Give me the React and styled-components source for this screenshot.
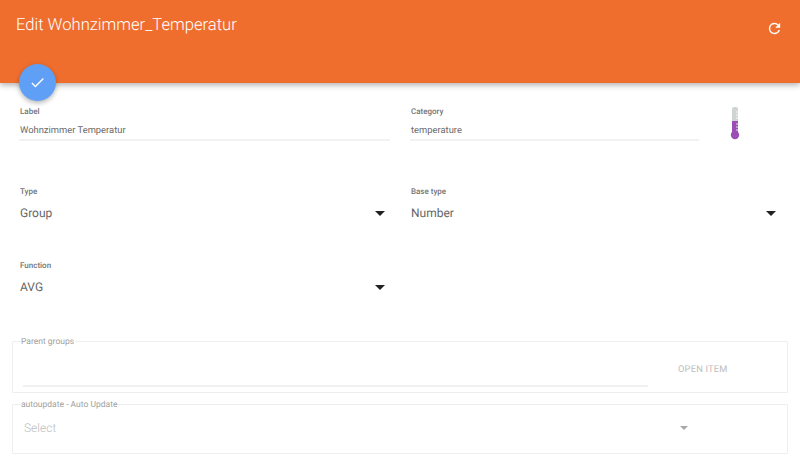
import React from "react";
import styled, { createGlobalStyle } from "styled-components";

const Global = createGlobalStyle`
  html, body { margin: 0; padding: 0; background: #fff; }
  body { font-family: Roboto, "Liberation Sans", sans-serif; overflow: hidden; text-rendering: geometricPrecision; }
`;
const Page = styled.div`
  width: 800px; height: 469px; position: relative; overflow: hidden; background: #fff;
`;
const Header = styled.header`
  height: 83px; box-sizing: border-box; background: #ef6e2e; color: #fff;
  display: flex; justify-content: space-between; align-items: flex-start;
  padding: 15px 16px 0 16px;
  box-shadow: 0 2px 6px rgba(0,0,0,.32);
`;
const Title = styled.h1`
  margin: 0; font-size: 16.6px; line-height: 21px; font-weight: 300; color: #fff;
`;
const Reload = styled.svg`
  width: 17px; height: 17px; margin-top: 5px; margin-right: 1px; fill: #fff; display: block;
`;
const Fab = styled.button`
  position: absolute; left: 19px; top: 64px; width: 37px; height: 37px; padding: 0;
  border: 0; border-radius: 50%; background: #5f9ff5;
  box-shadow: 0 2px 5px rgba(0,0,0,.3);
  display: flex; align-items: center; justify-content: center;
`;
const Form = styled.main`
  display: flex; flex-direction: column;
  padding: 23px 12px 0 12px;
`;
const Row = styled.div`
  display: grid; grid-template-columns: 371px 289px 1fr; column-gap: 20px;
  height: ${p => p.$h}px; padding-left: 7px;
`;
const Field = styled.div`
  display: flex; flex-direction: column; min-width: 0;
`;
const WideField = styled(Field)`
  width: 371px;
`;
const FieldLabel = styled.label`
  font-size: 8px; line-height: 12px; font-weight: 500; color: #757575; padding-left: 1px;
`;
const TextValue = styled.div`
  font-size: 9.4px; line-height: 14px; font-weight: 400; color: #6a6a6a; margin-top: 6px; padding: 0 1px 1px;
  border-bottom: 2px solid #f2f2f2;
`;
const SelectValue = styled.div`
  display: flex; align-items: center; justify-content: space-between;
  font-size: 12px; line-height: 18px; font-weight: 400; color: #666;
  margin-top: 5px; padding: 0 5px 0 1px; height: 20px;
`;
const Caret = styled.span`
  width: 0; height: 0; display: block;
  border-left: ${p => p.$s}px solid transparent;
  border-right: ${p => p.$s}px solid transparent;
  border-top: ${p => p.$s}px solid ${p => p.$c};
`;
const IconCell = styled.div`
  display: flex; justify-content: flex-start; padding: 1px 0 0 11px;
`;
const Box = styled.fieldset`
  margin: 0 0 ${p => p.$gap}px 0; padding: 0; border: 1px solid #eeeeee; border-radius: 1px;
  height: ${p => p.$h}px; box-sizing: border-box; min-width: 0;
  width: 776px; display: flex; align-items: flex-start;
`;
const Legend = styled.legend`
  font-size: 8.5px; line-height: 12px; color: #a0a0a0; padding: 2px 1px 0 0; margin-left: 8px; font-weight: 400;
`;
const GroupLine = styled.div`
  width: 625px; margin: 37px 0 0 10px; height: 2px; background: #f0f0f0; flex: none;
`;
const OpenItem = styled.span`
  font-size: 9.3px; line-height: 12px; font-weight: 400; color: #bdbdbd; letter-spacing: .2px;
  margin: 16px 0 0 30px;
`;
const Placeholder = styled.span`
  font-size: 12px; line-height: 16px; font-weight: 300; color: #bdbdbd; margin: 9px 0 0 11px; flex: none; width: 656px;
`;
const MutedCaret = styled.div`
  padding-top: 15px;
`;

export default function App() {
  return (
    <Page>
      <Global />
      <Header>
        <Title>Edit Wohnzimmer_Temperatur</Title>
        <Reload viewBox="0 0 24 24">
          <path d="M17.65 6.35A7.96 7.96 0 0 0 12 4a8 8 0 1 0 7.73 10h-2.08A6 6 0 1 1 12 6c1.66 0 3.14.69 4.22 1.78L13 11h7V4l-2.35 2.35z" />
        </Reload>
      </Header>
      <Fab aria-label="Save">
        <svg width="17" height="17" viewBox="0 0 24 24" fill="#fff">
          <path d="M9 16.2 4.8 12l-1.4 1.4L9 19 21 7l-1.4-1.4z" />
        </svg>
      </Fab>
      <Form>
        <Row $h={80}>
          <Field>
            <FieldLabel>Label</FieldLabel>
            <TextValue>Wohnzimmer Temperatur</TextValue>
          </Field>
          <Field>
            <FieldLabel>Category</FieldLabel>
            <TextValue>temperature</TextValue>
          </Field>
          <IconCell>
            <svg width="10" height="33" viewBox="0 0 10 33">
              <rect x="2" y="0" width="6" height="16" rx="2" fill="#cfd4d4" />
              <rect x="2" y="14" width="6" height="14" fill="#9b4fb5" />
              <circle cx="5" cy="28" r="4.2" fill="#9b4fb5" />
              <path d="M6 5h2M6 8h2M6 11h2M6 17h2M6 20h2M6 23h2" stroke="#fff" strokeWidth=".8" />
            </svg>
          </IconCell>
        </Row>
        <Row $h={74}>
          <Field>
            <FieldLabel>Type</FieldLabel>
            <SelectValue>Group<Caret $s={5} $c="#212121" /></SelectValue>
          </Field>
          <WideField>
            <FieldLabel>Base type</FieldLabel>
            <SelectValue>Number<Caret $s={5} $c="#212121" /></SelectValue>
          </WideField>
        </Row>
        <Row $h={74}>
          <Field>
            <FieldLabel>Function</FieldLabel>
            <SelectValue>AVG<Caret $s={5} $c="#212121" /></SelectValue>
          </Field>
        </Row>
        <Box $h={59} $gap={4}>
          <Legend>Parent groups</Legend>
          <GroupLine />
          <OpenItem>OPEN ITEM</OpenItem>
        </Box>
        <Box $h={57} $gap={0}>
          <Legend>autoupdate - Auto Update</Legend>
          <Placeholder>Select</Placeholder>
          <MutedCaret><Caret $s={4} $c="#a8a8a8" /></MutedCaret>
        </Box>
      </Form>
    </Page>
  );
}
